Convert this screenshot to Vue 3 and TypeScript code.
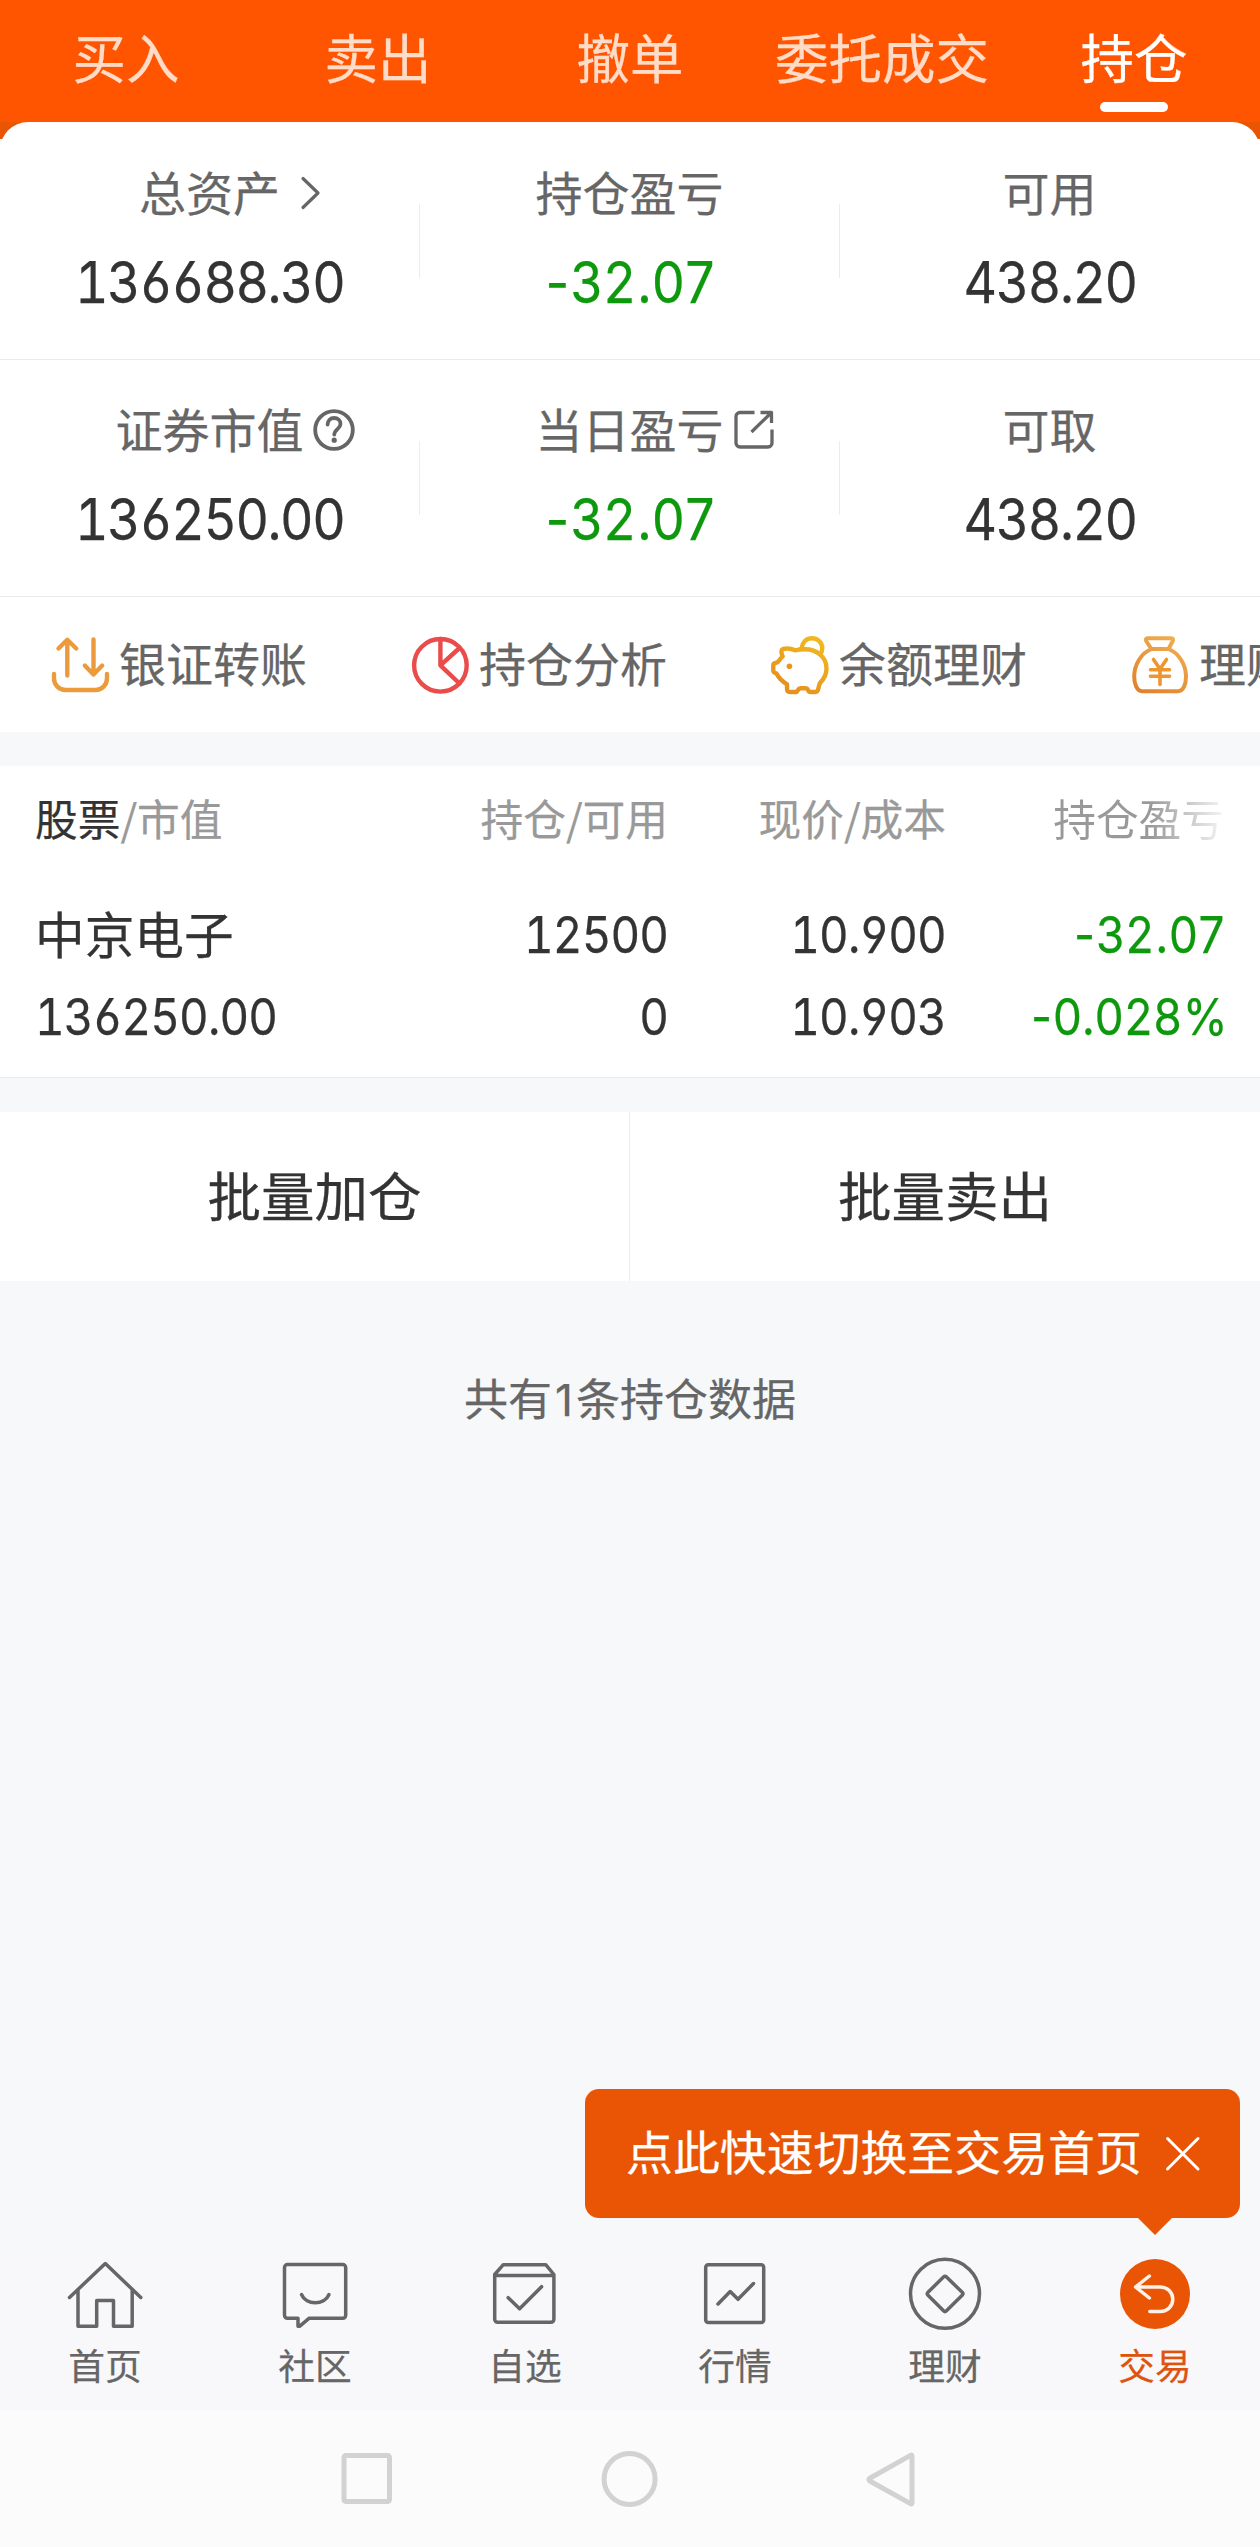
<script setup lang="ts">
interface Stat {
  label: string
  value: string
  icon?: 'chevron' | 'help' | 'share'
  down?: boolean
}

const tabs: string[] = ['买入', '卖出', '撤单', '委托成交', '持仓']
const activeTab = '持仓'

const stats: Stat[][] = [
  [
    { label: '总资产', value: '136688.30', icon: 'chevron' },
    { label: '持仓盈亏', value: '-32.07', down: true },
    { label: '可用', value: '438.20' },
  ],
  [
    { label: '证券市值', value: '136250.00', icon: 'help' },
    { label: '当日盈亏', value: '-32.07', icon: 'share', down: true },
    { label: '可取', value: '438.20' },
  ],
]

const actions = [
  { key: 'transfer', label: '银证转账' },
  { key: 'analysis', label: '持仓分析' },
  { key: 'balance', label: '余额理财' },
  { key: 'wealth', label: '理财' },
]

const navItems = [
  { key: 'home', label: '首页' },
  { key: 'community', label: '社区' },
  { key: 'watchlist', label: '自选' },
  { key: 'market', label: '行情' },
  { key: 'finance', label: '理财' },
  { key: 'trade', label: '交易' },
]
</script>

<template>
  <div class="screen">
    <header class="tabs">
      <div v-for="tab in tabs" :key="tab" class="tab" :class="{ active: tab === activeTab }">
        <span>{{ tab }}</span>
      </div>
    </header>

    <div class="card-wrap">
      <section class="summary">
        <div v-for="(row, r) in stats" :key="r" class="stat-row">
          <div v-for="stat in row" :key="stat.label" class="stat">
            <div class="stat-label">
              <span class="caption">{{ stat.label }}</span>
              <span v-if="stat.icon" class="hang">
                <svg v-if="stat.icon === 'chevron'" class="chevron" width="22" height="36" viewBox="0 0 22 36">
                  <path d="M3 3.5 18 18 3 32.5" />
                </svg>
                <svg v-else-if="stat.icon === 'help'" class="help" width="42" height="42" viewBox="0 0 42 42">
                  <circle cx="21" cy="21" r="18.8" />
                  <path d="M14.6 15.6c0-4 2.8-6.6 6.5-6.6s6.4 2.5 6.4 6c0 4.8-6.2 5.6-6.2 10.6" />
                  <circle class="dot" cx="21.2" cy="31.2" r="2.6" />
                </svg>
                <svg v-else class="share" width="42" height="42" viewBox="0 0 42 42">
                  <path d="M21.500 3.500H7a4 4 0 0 0-4 4V34a4 4 0 0 0 4 4h28a4 4 0 0 0 4-4V20.500M18.500 23 38 4M27.500 3.500H38.500V14" />
                </svg>
              </span>
            </div>
            <div class="stat-value num" :class="{ down: stat.down }"><span>{{ stat.value }}</span></div>
          </div>
        </div>

        <div class="actions">
          <div v-for="action in actions" :key="action.key" class="action">
            <svg v-if="action.key === 'transfer'" width="60" height="60" viewBox="0 0 60 60" stroke="#eb9b3b">
              <path d="M17.300 40.500V5M8.500 13.500 17.300 4.800 26.200 13.500M43.500 4.500V39.500M34.800 30.500 43.500 39.500 52.200 30.500" />
              <path d="M4 39v4.500a11.500 11.500 0 0 0 11.500 11.500h30A11.500 11.500 0 0 0 57 43.500V39" />
            </svg>
            <svg v-else-if="action.key === 'analysis'" width="60" height="60" viewBox="0 0 60 60" stroke="#ea4b4b">
              <circle cx="30.400" cy="30.300" r="26.300" />
              <path d="M30.400 4V30.300L49.500 48.500M30.400 30.300 49.500 13" />
            </svg>
            <svg v-else-if="action.key === 'balance'" width="60" height="60" viewBox="0 0 60 60" stroke="url(#pig)">
              <defs>
                <linearGradient id="pig" gradientUnits="userSpaceOnUse" x1="45" y1="0" x2="15" y2="50">
                  <stop offset="0" stop-color="#f1ba1e" />
                  <stop offset="1" stop-color="#e6921f" />
                </linearGradient>
              </defs>
              <path d="M12.700 21.500C9 24 9.500 27.500 5.500 28 3.800 28.200 3.300 29 3.300 30.500V35.500C3.300 37.500 4.500 37.800 6.500 38.500 9 43.500 12.500 46.500 17 49.300V53.500C17 56.500 18 57 20 57H25.500C28.500 57 27.500 53.300 30.500 53.300H36C38.500 53.300 37.500 57 40.500 57H45.500C49 57 48 52 50 48 54.500 43.500 56.500 38.500 56.500 33.500 56.500 22 47 14.300 35 14.300 31 14.300 28 14.600 25 15.300 21 13.300 16.500 13.300 13 14 10.500 14.800 11.500 19 12.700 21.500Z" />
              <path d="M31.500 13.500C32.500 7 36.500 3.200 42 3.200S52.300 7.500 52.300 13c0 2.500-.6 4.500-2 6.500" />
              <circle cx="19.400" cy="31.300" r="2.800" fill="#e6951f" stroke="none" />
            </svg>
            <svg v-else width="60" height="60" viewBox="0 0 60 60" stroke="url(#bag)">
              <defs>
                <linearGradient id="bag" gradientUnits="userSpaceOnUse" x1="45" y1="0" x2="10" y2="58">
                  <stop offset="0" stop-color="#efb052" />
                  <stop offset="1" stop-color="#e2802b" />
                </linearGradient>
              </defs>
              <path d="M21.500 14 16.500 6.500Q14.800 3.300 18 3.300H41Q44.200 3.300 42.500 6.500L38.500 14ZM21.500 14C11 18 4.200 30 4.200 41.500 4.200 49 7 56.300 12 56.300H48C53.500 56.300 56 49 56 41.500 56 30 49 18 38.500 14" stroke-width="4" />
              <path d="M23.500 24.500 30 34 36.500 24.500M30 34V49.500M20.500 34.700H39.500M20.500 41.300H39.500" stroke="#ee952f" stroke-width="3.600" />
            </svg>
            <span>{{ action.label }}</span>
          </div>
        </div>
      </section>
    </div>

    <section class="holdings">
      <div class="grid head">
        <div><b>股票</b>/市值</div>
        <div>持仓/可用</div>
        <div>现价/成本</div>
        <div class="faded">持仓盈亏</div>
      </div>
      <div class="grid line">
        <div class="name">中京电子</div>
        <div class="num"><span>12500</span></div>
        <div class="num"><span>10.900</span></div>
        <div class="num down"><span>-32.07</span></div>
      </div>
      <div class="grid line">
        <div class="num"><span>136250.00</span></div>
        <div class="num"><span>0</span></div>
        <div class="num"><span>10.903</span></div>
        <div class="num down percent"><span>-0.028%</span></div>
      </div>
    </section>

    <section class="batch">
      <div>批量加仓</div>
      <div>批量卖出</div>
    </section>

    <p class="count">共有<span class="digit">1</span>条持仓数据</p>

    <footer class="bottom">
      <div class="toast">
        <span>点此快速切换至交易首页</span>
        <svg width="36" height="36" viewBox="0 0 36 36"><path d="M2.500 2.500 33 33M33 2.500 2.500 33" /></svg>
      </div>
      <nav class="nav">
        <div v-for="item in navItems" :key="item.key" class="nav-item" :class="{ on: item.key === 'trade' }">
          <svg width="80" height="80" viewBox="0 0 80 80">
            <template v-if="item.key === 'home'">
              <path d="M4.500 43.500 40.300 9.500 75.800 43.500M13 36V72.300H31.700V46.500H48.500V72.300H67.200V36" />
            </template>
            <template v-else-if="item.key === 'community'">
              <path d="M12.500 10.500H67.700a3 3 0 0 1 3 3V61.300a3 3 0 0 1-3 3H34L24.500 72.300H23V64.300H12.500a3 3 0 0 1-3-3V13.500a3 3 0 0 1 3-3Z" />
              <path d="M26.500 40.500C31 51.500 49.500 51.500 54 40.500" />
            </template>
            <template v-else-if="item.key === 'watchlist'">
              <path d="M18.300 10.700H60.700L68.900 20.500V65.300a3 3 0 0 1-3 3H12.700a3 3 0 0 1-3-3V20.500ZM9.700 21.500H68.900M23.200 43.700 34.600 54.800 56.600 32.700" />
            </template>
            <template v-else-if="item.key === 'market'">
              <rect x="10.700" y="10.700" width="58" height="57.800" rx="2.500" />
              <path d="M23 50 35.200 37.500 43 45.300 58.500 29.500" />
            </template>
            <template v-else-if="item.key === 'finance'">
              <circle cx="40" cy="39.800" r="34.500" />
              <path d="M38.500 23 23 38.300Q21.500 39.800 23 41.300L38.500 56.800Q40 58.300 41.500 56.800L57.200 41.300Q58.700 39.800 57.200 38.300L41.500 23Q40 21.500 38.500 23Z" />
            </template>
            <template v-else>
              <circle cx="40" cy="40" r="35" fill="#e95504" stroke="none" />
              <path d="M34.400 22 20.500 33 34.400 44M20.500 33H45.500a12.300 12.300 0 0 1 0 24.600H34.800" stroke="#fff1e6" />
            </template>
          </svg>
          <span>{{ item.label }}</span>
        </div>
      </nav>
      <div class="system">
        <svg width="60" height="60" viewBox="0 0 60 60"><rect x="6" y="6.500" width="45.500" height="46" rx="2" /></svg>
        <svg width="60" height="60" viewBox="0 0 60 60"><circle cx="29.600" cy="30" r="25.500" /></svg>
        <svg width="60" height="60" viewBox="0 0 60 60"><path d="M49 7V54Q49 55.500 47.500 54.600L6.800 32Q5 30.600 6.800 29.200L47.500 6.400Q49 5.500 49 7Z" /></svg>
      </div>
    </footer>
  </div>
</template>

<style>
body {
  margin: 0;
  background: #f7f8fa;
}
</style>

<style scoped>
.screen {
  width: 1260px;
  height: 2547px;
  display: flex;
  flex-direction: column;
  overflow: hidden;
  background: #f7f8fa;
  color: #333;
  font-family: "Noto Sans CJK SC", sans-serif;
  -webkit-text-stroke: 0.25px;
}

svg {
  display: block;
  flex: none;
  fill: none;
  stroke-linecap: round;
  stroke-linejoin: round;
}

.num {
  font-family: Inter, sans-serif;
  font-feature-settings: "tnum", "cv03", "cv04", "calt" 0;
  letter-spacing: -0.028em;
}

.num span {
  display: inline-block;
  transform: scaleX(0.9);
}

.down {
  color: #0d980d;
}

.num.down {
  font-feature-settings: "cv03", "cv04", "calt" 0;
  letter-spacing: 0.03em;
}

.num.down span {
  margin-right: -0.03em;
}

.tabs {
  flex: none;
  height: 122px;
  display: grid;
  grid-template-columns: repeat(5, 1fr);
  background: #ff5500;
}

.tab {
  display: flex;
  flex-direction: column;
  align-items: center;
  font-size: 53.5px;
  line-height: 80px;
  padding-top: 16px;
  color: #ffdcc8;
}

.tab.active {
  color: #fff;
}

.tab.active::after {
  content: "";
  width: 68px;
  height: 10px;
  margin-top: 6px;
  border-radius: 5px;
  background: #fff;
}

.card-wrap {
  flex: none;
  background: linear-gradient(#e85503 0 17px, #fff 17px);
}

.summary {
  padding-top: 1px;
  background: #fff;
  border-radius: 28px 28px 0 0;
}

.stat-row {
  display: grid;
  grid-template-columns: repeat(3, 1fr);
  height: 237px;
  box-shadow: inset 0 -1px #ebebeb;
}

.stat {
  display: flex;
  flex-direction: column;
  align-items: center;
  padding-top: 35px;
  background: linear-gradient(#ececec, #ececec) right 81px / 1px 74px no-repeat;
}

.stat:last-child {
  background: none;
}

.stat-label {
  display: flex;
  align-items: center;
  height: 70px;
  font-size: 47px;
  line-height: 70px;
  color: #666;
}

.caption {
  position: relative;
  top: -2.5px;
  left: -0.5px;
}

.hang {
  width: 0;
  overflow: visible;
}

.hang svg {
  stroke: #666;
  stroke-width: 3.8;
}

.hang .chevron {
  margin-left: 19px;
  stroke-width: 3.2;
}

.hang .help {
  margin-left: 8.5px;
}

.hang .help .dot {
  fill: #666;
  stroke: none;
}

.hang .share {
  margin-left: 8.5px;
  stroke-width: 3.3;
  stroke-linecap: butt;
}

.stat-value {
  margin-top: 19px;
  font-size: 57.5px;
  line-height: 70px;
}

.actions {
  display: flex;
  height: 135px;
  padding-left: 50px;
  overflow: hidden;
}

.action {
  flex: none;
  width: 360px;
  display: flex;
  align-items: center;
  gap: 9px;
  font-size: 47px;
  line-height: 135px;
  color: #666;
  white-space: nowrap;
}

.action svg {
  stroke-width: 4.4;
}

.action span {
  position: relative;
  top: -3px;
}

.holdings {
  flex: none;
  height: 311px;
  margin-top: 34px;
  background: #fff;
  border-bottom: 1px solid #e9ebee;
}

.grid {
  display: grid;
  grid-template-columns: 333px 300px 278px 278px;
  padding-left: 35px;
  text-align: right;
}

.grid > div:first-child {
  text-align: left;
}

.head {
  height: 128px;
  font-size: 42.7px;
  line-height: 103px;
  color: #999;
}

.head b {
  font-weight: 400;
  color: #333;
}

.faded {
  background: linear-gradient(90deg, #999 0 205px, #fff 285px);
  background-clip: text;
  -webkit-background-clip: text;
  -webkit-text-stroke: 0;
  color: transparent;
}

.line {
  height: 82px;
  line-height: 82px;
  font-size: 50.8px;
}

.line .num {
  letter-spacing: -0.018em;
}

.line .num.down {
  letter-spacing: 0.035em;
}

.line .num span {
  transform-origin: right;
}

.line .num:first-child span {
  transform-origin: left;
}

.line .percent span {
  margin-right: -5px;
}

.line .percent.num {
  letter-spacing: 0.022em;
}

.line .name {
  font-size: 49.7px;
  line-height: 76px;
}

.batch {
  flex: none;
  display: grid;
  grid-template-columns: 1fr 1fr;
  height: 169px;
  margin-top: 34px;
  background: #fff;
  font-size: 53.5px;
  line-height: 164px;
  text-align: center;
}

.batch div:first-child {
  padding-right: 1px;
  box-shadow: inset -1px 0 #ededed;
}

.count {
  margin: 86px 0 0;
  font-size: 44px;
  line-height: 60px;
  text-align: center;
  color: #666;
}

.digit {
  display: inline-block;
  width: 24px;
  font-family: Inter, sans-serif;
  line-height: 1;
}

.bottom {
  position: relative;
  margin-top: auto;
}

.toast {
  position: absolute;
  right: 20px;
  bottom: 329px;
  width: 655px;
  height: 129px;
  box-sizing: border-box;
  padding: 0 39px 0 41px;
  display: flex;
  align-items: center;
  justify-content: space-between;
  border-radius: 14px;
  background: #e95504;
  color: #fff;
  font-size: 46.9px;
  line-height: 122px;
  white-space: nowrap;
}

.toast span {
  padding-bottom: 7px;
}

.toast svg {
  stroke: #fff;
  stroke-width: 3;
}

.toast::after {
  content: "";
  position: absolute;
  right: 68px;
  top: 100%;
  border: 17px solid transparent;
  border-top-color: #e95504;
  border-bottom-width: 0;
}

.nav {
  display: grid;
  grid-template-columns: repeat(6, 1fr);
  height: 157px;
  background: #f8f8fa;
}

.nav-item {
  display: flex;
  flex-direction: column;
  align-items: center;
  color: #666;
  font-size: 36.7px;
  line-height: 50px;
}

.nav-item svg {
  margin-bottom: 5px;
  stroke: #666;
  stroke-width: 3.5;
}

.nav-item.on {
  color: #dd5410;
}

.system {
  display: flex;
  justify-content: center;
  gap: 202.5px;
  height: 136px;
  box-sizing: border-box;
  padding-top: 38px;
  background: #fbfbfb;
}

.system svg {
  stroke: #d2d2d2;
  stroke-width: 5;
}
</style>
